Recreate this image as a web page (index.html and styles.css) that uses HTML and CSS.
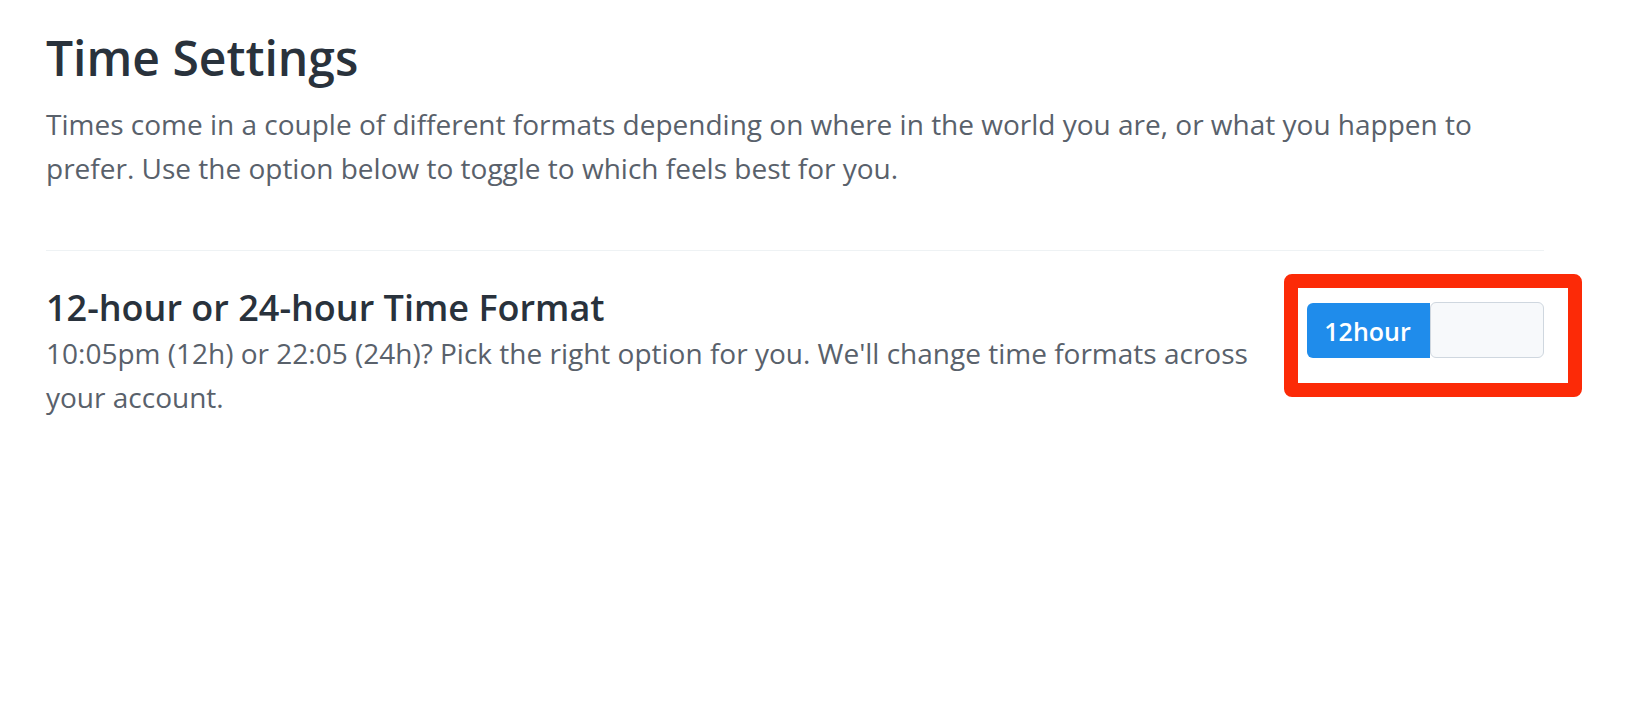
FILE: index.html
```html
<!DOCTYPE html>
<html lang="en">
<head>
<meta charset="utf-8">
<title>Time Settings</title>
<link rel="stylesheet" href="styles.css">
</head>
<body>
<main class="page">
  <h1 class="title">Time Settings</h1>
  <p class="intro">Times come in a couple of different formats depending on where in the world you are, or what you happen to prefer. Use the option below to toggle to which feels best for you.</p>
  <hr class="divider">
  <section class="setting">
    <div class="setting-text">
      <h2 class="setting-title">12-hour or 24-hour Time Format</h2>
      <p class="setting-desc">10:05pm (12h) or 22:05 (24h)? Pick the right option for you. We'll change time formats across your account.</p>
    </div>
    <div class="setting-control">
      <div class="toggle">
        <span class="toggle-on">12hour</span>
        <span class="toggle-knob"></span>
      </div>
      <div class="highlight"></div>
    </div>
  </section>
</main>
</body>
</html>
```

FILE: styles.css
```css
* { box-sizing: border-box; }

html, body {
  margin: 0;
  padding: 0;
  background: #ffffff;
}

body {
  font-family: "Open Sans", "Noto Sans", sans-serif;
}

.page {
  padding: 29px 86px 0 46px;
}

.title {
  margin: 0;
  font-size: 48px;
  line-height: 58px;
  font-weight: 600;
  color: #29323c;
}

.intro {
  margin: 15px 0 0;
  font-size: 28px;
  line-height: 44px;
  color: #59616b;
}

.divider {
  margin: 60px 0 0;
  border: 0;
  height: 1px;
  background: #eef2f4;
}

.setting {
  margin-top: 35px;
  display: flex;
  align-items: flex-start;
  gap: 40px;
}

.setting-text {
  flex: 1;
  min-width: 0;
}

.setting-title {
  margin: 0;
  font-size: 36px;
  line-height: 44px;
  font-weight: 600;
  color: #29323c;
}

.setting-desc {
  margin: 1px 0 0;
  font-size: 28px;
  line-height: 44px;
  color: #59616b;
}

.setting-control {
  position: relative;
  flex: 0 0 237px;
  margin-top: 17px;
}

.toggle {
  display: flex;
  height: 55px;
}

.toggle-on {
  flex: 0 0 123px;
  display: flex;
  align-items: center;
  justify-content: center;
  background: #1f8ceb;
  color: #ffffff;
  font-size: 25px;
  font-weight: 600;
  border-radius: 6px 0 0 6px;
  padding-right: 2px;
}

.toggle-knob {
  flex: 1;
  background: #f7f9fb;
  border: 1.5px solid #cfd7df;
  border-radius: 6px;
  margin-top: -1px;
  height: 56px;
}

.highlight {
  position: absolute;
  left: -23px;
  top: -29px;
  width: 298px;
  height: 123px;
  border: 14px solid #fc2a07;
  border-radius: 8px;
}
```
